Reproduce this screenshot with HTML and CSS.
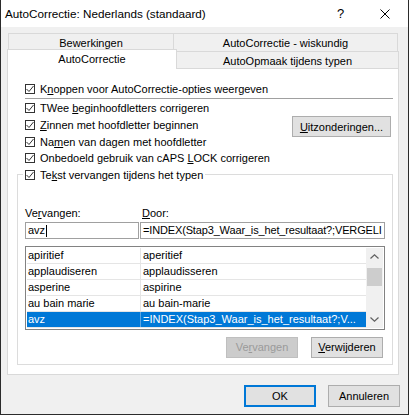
FILE: index.html
```html
<!DOCTYPE html>
<html lang="nl">
<head>
    <meta charset="UTF-8">
    <meta name="viewport" content="width=device-width, initial-scale=1.0">
    <title>AutoCorrectie: Nederlands (standaard)</title>
    <link rel="stylesheet" href="styles.css">
</head>
<body>
    <div class="dialog">
        <div class="titlebar">
            <span class="title">AutoCorrectie: Nederlands (standaard)</span>
            <span class="help">?</span>
            <span class="close">
                <svg width="10" height="10" viewBox="0 0 10 10"><path d="M0.5 0.5 L9.5 9.5 M9.5 0.5 L0.5 9.5" stroke="#000" stroke-width="1" fill="none"/></svg>
            </span>
        </div>

        <div class="tabs">
            <div class="tabrow back">
                <div class="tab tab-left">Bewerkingen</div>
                <div class="tab tab-right">AutoCorrectie - wiskundig</div>
            </div>
            <div class="tabrow front">
                <div class="tab tab-left active">AutoCorrectie</div>
                <div class="tab tab-right">AutoOpmaak tijdens typen</div>
            </div>
        </div>

        <div class="panel">
            <div class="check check-first">
                <span class="box"><svg width="8" height="8" viewBox="0 0 8 8"><polyline points="0.5,4 3,6.5 7.5,1" /></svg></span>
                <span>K<u>n</u>oppen voor AutoCorrectie-opties weergeven</span>
            </div>
            <div class="separator"></div>

            <div class="options">
                <div class="option-list">
                    <div class="check">
                        <span class="box"><svg width="8" height="8" viewBox="0 0 8 8"><polyline points="0.5,4 3,6.5 7.5,1" /></svg></span>
                        <span>TWee <u>b</u>eginhoofdletters corrigeren</span>
                    </div>
                    <div class="check">
                        <span class="box"><svg width="8" height="8" viewBox="0 0 8 8"><polyline points="0.5,4 3,6.5 7.5,1" /></svg></span>
                        <span><u>Z</u>innen met hoofdletter beginnen</span>
                    </div>
                    <div class="check">
                        <span class="box"><svg width="8" height="8" viewBox="0 0 8 8"><polyline points="0.5,4 3,6.5 7.5,1" /></svg></span>
                        <span>Na<u>m</u>en van dagen met hoofdletter</span>
                    </div>
                    <div class="check">
                        <span class="box"><svg width="8" height="8" viewBox="0 0 8 8"><polyline points="0.5,4 3,6.5 7.5,1" /></svg></span>
                        <span>Onbedoeld gebruik van cAPS <u>L</u>OCK corrigeren</span>
                    </div>
                </div>
                <button class="btn btn-except"><u>U</u>itzonderingen...</button>
            </div>

            <fieldset class="replace">
                <legend>
                    <span class="check check-legend">
                        <span class="box"><svg width="8" height="8" viewBox="0 0 8 8"><polyline points="0.5,4 3,6.5 7.5,1" /></svg></span>
                        <span>Te<u>k</u>st vervangen tijdens het typen</span>
                    </span>
                </legend>

                <div class="fields">
                    <div class="field-label">Ve<u>r</u>vangen:</div>
                    <div class="field-label door"><u>D</u>oor:</div>
                    <div class="textbox">avz<span class="caret"></span></div>
                    <div class="textbox textbox-long">=INDEX(Stap3_Waar_is_het_resultaat?;VERGELI</div>
                </div>

                <div class="list">
                    <div class="rows">
                        <div class="row"><span class="cell">apiritief</span><span class="cell">aperitief</span></div>
                        <div class="row"><span class="cell">applaudiseren</span><span class="cell">applaudisseren</span></div>
                        <div class="row"><span class="cell">asperine</span><span class="cell">aspirine</span></div>
                        <div class="row"><span class="cell">au bain marie</span><span class="cell">au bain-marie</span></div>
                        <div class="row selected"><span class="cell">avz</span><span class="cell">=INDEX(Stap3_Waar_is_het_resultaat?;V...</span></div>
                    </div>
                    <div class="scrollbar">
                        <div class="sb-btn"><svg width="9" height="5" viewBox="0 0 9 5"><polyline points="0.5,4.5 4.5,0.8 8.5,4.5" /></svg></div>
                        <div class="sb-track"><div class="sb-thumb"></div></div>
                        <div class="sb-btn"><svg width="9" height="5" viewBox="0 0 9 5"><polyline points="0.5,0.5 4.5,4.2 8.5,0.5" /></svg></div>
                    </div>
                </div>

                <div class="list-buttons">
                    <button class="btn" disabled>Ve<u>r</u>vangen</button>
                    <button class="btn"><u>V</u>erwijderen</button>
                </div>
            </fieldset>
        </div>

        <div class="dialog-buttons">
            <button class="btn btn-default">OK</button>
            <button class="btn">Annuleren</button>
        </div>
    </div>
</body>
</html>
```

FILE: styles.css
```css
* {
    box-sizing: border-box;
}

html, body {
    margin: 0;
}

body {
    font-family: "Segoe UI", "Liberation Sans", Arial, sans-serif;
    font-size: 11px;
    color: #000;
    background: #f0f0f0;
}

.dialog {
    width: 409px;
    height: 415px;
    background: #f0f0f0;
    border: 1px solid #2b2b2b;
    border-top: none;
    overflow: hidden;
}

/* title bar */
.titlebar {
    display: flex;
    align-items: center;
    height: 27px;
    background: #fff;
}

.title {
    flex: 1;
    padding-left: 4px;
    font-size: 11.7px;
}

.help {
    width: 46px;
    padding-left: 3px;
    text-align: center;
    font-size: 13px;
}

.close {
    width: 46px;
    display: flex;
    justify-content: center;
}

/* tabs */
.tabs {
    margin: 6px 9px 0 6px;
}

.tabrow {
    display: flex;
}

.tabrow.back {
    height: 18px;
    padding-left: 1px;
}

.tabrow.front {
    height: 17px;
}

.tab {
    border: 1px solid #d9d9d9;
    border-bottom: none;
    background: #f0f0f0;
    text-align: center;
    line-height: 18px;
    white-space: nowrap;
}

.back .tab {
    height: 18px;
}

.front .tab {
    height: 17px;
}

.back .tab-left {
    width: 166px;
}

.back .tab-right {
    width: 225px;
    margin-left: -1px;
}

.front .tab-left {
    width: 170px;
}

.front .tab-right {
    width: 223px;
    margin-left: -1px;
}

.tab.active {
    position: relative;
    z-index: 1;
    height: 20px;
    margin-top: -2px;
    background: #fff;
}

/* panel */
.panel {
    margin: 0 9px 0 6px;
    background: #fff;
    border: 1px solid #d9d9d9;
    padding: 11px 5px 9px 9px;
}

.check {
    display: flex;
    align-items: center;
    height: 16.67px;
    padding-left: 8px;
    white-space: nowrap;
}

.check-first {
    height: 17px;
}

.check-legend {
    padding-left: 0;
}

.box {
    display: flex;
    align-items: center;
    justify-content: center;
    width: 10px;
    height: 10px;
    border: 1px solid #333;
    background: #fff;
    margin-right: 5px;
}

.box polyline {
    fill: none;
    stroke: #333;
    stroke-width: 1;
}

.separator {
    height: 1px;
    background: #a0a0a0;
    margin: 1px 0 1px 8px;
}

.options {
    display: flex;
    justify-content: space-between;
}

.btn {
    font: inherit;
    color: #000;
    background: #e1e1e1;
    border: 1px solid #adadad;
    padding: 0;
    width: 72px;
    height: 21px;
}

.btn:disabled {
    background: #cccccc;
    border-color: #bfbfbf;
    color: #9a9a9a;
}

.btn-except {
    width: 99px;
    margin: 16px 2px 0 0;
}

/* group box */
.replace {
    margin: 0;
    min-width: 0;
    border: 1px solid #dcdcdc;
    padding: 21.67px 7px 6px 7px;
}

.replace legend {
    padding: 0 2px;
    margin-left: -2px;
}

.fields {
    display: grid;
    grid-template-columns: 114px 245px;
    column-gap: 1px;
}

.field-label {
    line-height: 17px;
    height: 17px;
}

.field-label.door {
    padding-left: 2px;
}

.textbox {
    height: 17px;
    border: 1px solid #a0a0a0;
    padding-left: 2px;
    line-height: 15px;
    overflow: hidden;
    white-space: nowrap;
    background: #fff;
}

.textbox-long {
    letter-spacing: -0.15px;
}

.caret {
    display: inline-block;
    width: 1px;
    height: 12px;
    background: #000;
    vertical-align: middle;
    margin-left: 1px;
}

/* replacement list */
.list {
    display: flex;
    height: 84px;
    margin-top: 7px;
    border: 1px solid #828282;
    padding: 1px;
    background: #fff;
}

.rows {
    flex: 1;
}

.row {
    display: flex;
    height: 16px;
    border-bottom: 1px solid #e5e5e5;
    line-height: 15px;
}

.cell {
    overflow: hidden;
    white-space: nowrap;
}

.cell:first-child {
    width: 114px;
    padding-left: 1px;
    border-right: 1px solid #e5e5e5;
}

.cell + .cell {
    flex: 1;
    padding-left: 2px;
}

.row.selected {
    background: #0078d7;
    color: #fff;
}

.row.selected .cell:first-child {
    border-right-color: #5aa5e3;
}

.scrollbar {
    width: 17px;
    display: flex;
    flex-direction: column;
    background: #f0f0f0;
}

.sb-btn {
    height: 17px;
    display: flex;
    align-items: center;
    justify-content: center;
}

.sb-btn polyline {
    fill: none;
    stroke: #606060;
    stroke-width: 1.2;
}

.sb-track {
    flex: 1;
}

.sb-thumb {
    width: 15px;
    height: 18px;
    margin: 3px auto 0;
    background: #cdcdcd;
}

.list-buttons {
    display: flex;
    justify-content: flex-end;
    gap: 13px;
    margin-top: 7px;
    padding-right: 2px;
}

/* dialog buttons */
.dialog-buttons {
    display: flex;
    justify-content: flex-end;
    gap: 12px;
    margin-top: 10px;
    padding-right: 8px;
}

.dialog-buttons .btn {
    height: 22px;
}

.btn-default {
    border: 2px solid #0078d7;
}
```
